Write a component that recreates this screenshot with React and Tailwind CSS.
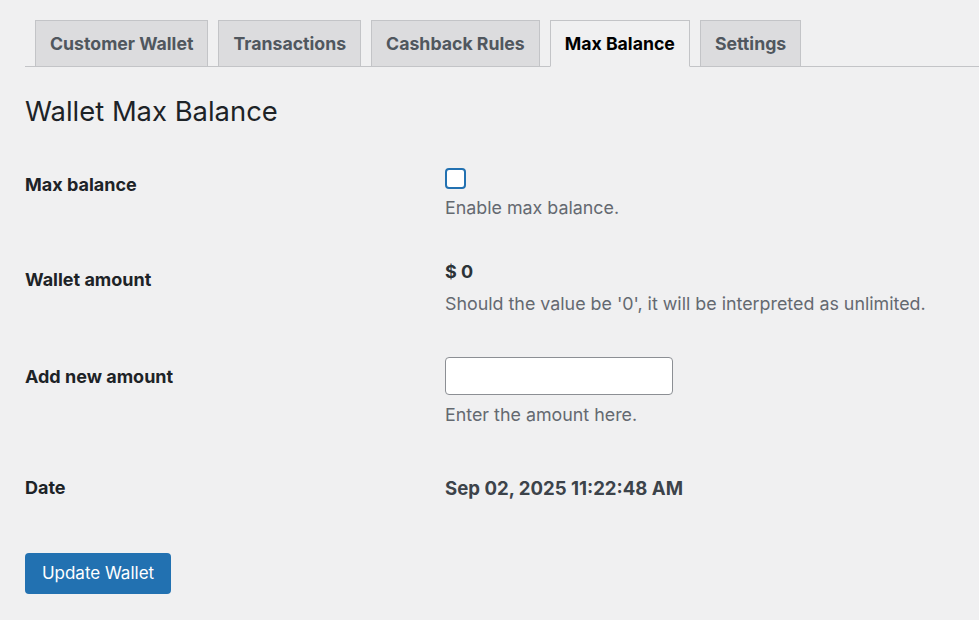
import { useState } from 'react';

const tabs = ['Customer Wallet', 'Transactions', 'Cashback Rules', 'Max Balance', 'Settings'];

export default function App() {
  const [active, setActive] = useState('Max Balance');
  const [enabled, setEnabled] = useState(false);
  const [amount, setAmount] = useState('');

  return (
    <div
      className="min-h-[620px] w-full bg-[#f0f0f1] text-[#1d2327]"
      style={{ fontFamily: 'Inter, "Noto Sans", sans-serif' }}
    >
      <div className="pl-[25px] pt-[20px]">
        {/* Tabs */}
        <nav className="flex border-b border-[#c3c4c7] pl-[10px]">
          {tabs.map(tab => (
            <button
              key={tab}
              onClick={() => setActive(tab)}
              className={
                'mr-[10px] -mb-px h-[47px] border border-[#c3c4c7] px-[14px] text-[17.7px] font-bold leading-none ' +
                (active === tab
                  ? 'border-b-[#f0f0f1] bg-[#f0f0f1] text-black'
                  : 'bg-[#dcdcde] text-[#50575e]')
              }
            >
              {tab}
            </button>
          ))}
        </nav>

        <h1 className="mt-[27px] text-[27.4px] font-normal leading-[34px] text-[#1d2327]">Wallet Max Balance</h1>

        {/* Form */}
        <div className="mt-[40px] flex flex-col text-[17.85px] leading-[24px]">
          <div className="flex">
            <div className="mt-[5px] w-[420px] text-[18px] font-bold">Max balance</div>
            <div>
              <button
                onClick={() => setEnabled(!enabled)}
                className="flex h-[21px] w-[21px] items-center justify-center rounded-[4px] border-2 border-[#2271b1] bg-white"
              >
                {enabled && (
                  <svg viewBox="0 0 20 20" className="h-4 w-4 text-[#2271b1]" fill="none" stroke="currentColor" strokeWidth="2.5">
                    <path d="M4 10l4 4 8-8" />
                  </svg>
                )}
              </button>
              <p className="mt-[7px] text-[#646970]">Enable max balance.</p>
            </div>
          </div>

          <div className="mt-[40px] flex">
            <div className="mt-[8px] w-[420px] text-[18px] font-bold">Wallet amount</div>
            <div>
              <p className="text-[18px] font-bold text-[#2c3338]">$ 0</p>
              <p className="mt-[8px] text-[#646970]">Should the value be '0', it will be interpreted as unlimited.</p>
            </div>
          </div>

          <div className="mt-[41px] flex">
            <div className="mt-[8px] w-[420px] text-[18px] font-bold">Add new amount</div>
            <div>
              <input
                type="text"
                value={amount}
                onChange={e => setAmount(e.target.value)}
                className="h-[38px] w-[228px] rounded-[4px] border border-[#8c8f94] bg-white px-2 outline-none"
              />
              <p className="mt-[8px] text-[#646970]">Enter the amount here.</p>
            </div>
          </div>

          <div className="mt-[49px] flex">
            <div className="w-[420px] text-[18px] font-bold">Date</div>
            <div className="text-[18.6px] font-bold text-[#3c434a]">Sep 02, 2025 11:22:48 AM</div>
          </div>
        </div>

        <button className="mt-[53px] h-[41px] w-[146px] rounded-[4px] bg-[#2271b1] text-[17px] text-white">
          Update Wallet
        </button>
      </div>
    </div>
  );
}
